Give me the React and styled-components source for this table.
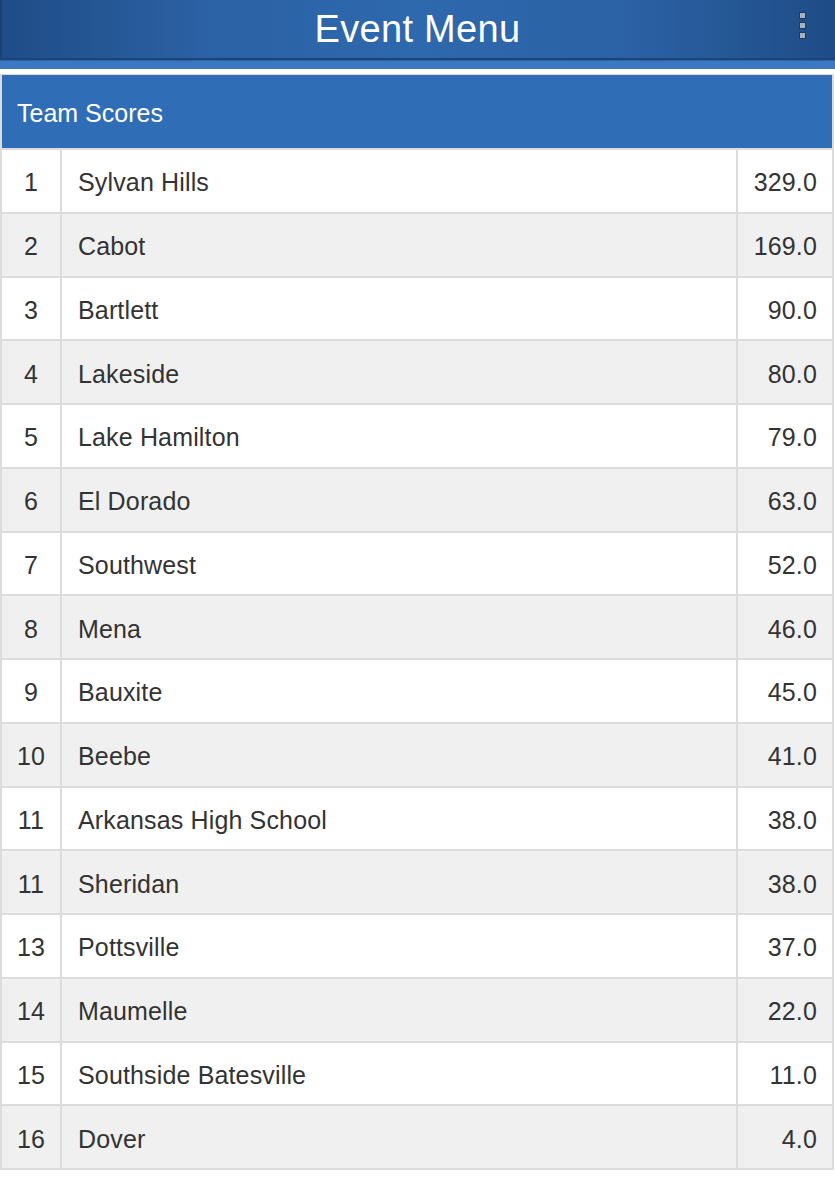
import styled, { createGlobalStyle } from 'styled-components';

const GlobalStyle = createGlobalStyle`
  body {
    margin: 0;
    background: #ffffff;
    font-family: "Liberation Sans", Arial, sans-serif;
  }
`;

const teams = [
  { rank: 1, name: 'Sylvan Hills', score: '329.0' },
  { rank: 2, name: 'Cabot', score: '169.0' },
  { rank: 3, name: 'Bartlett', score: '90.0' },
  { rank: 4, name: 'Lakeside', score: '80.0' },
  { rank: 5, name: 'Lake Hamilton', score: '79.0' },
  { rank: 6, name: 'El Dorado', score: '63.0' },
  { rank: 7, name: 'Southwest', score: '52.0' },
  { rank: 8, name: 'Mena', score: '46.0' },
  { rank: 9, name: 'Bauxite', score: '45.0' },
  { rank: 10, name: 'Beebe', score: '41.0' },
  { rank: 11, name: 'Arkansas High School', score: '38.0' },
  { rank: 11, name: 'Sheridan', score: '38.0' },
  { rank: 13, name: 'Pottsville', score: '37.0' },
  { rank: 14, name: 'Maumelle', score: '22.0' },
  { rank: 15, name: 'Southside Batesville', score: '11.0' },
  { rank: 16, name: 'Dover', score: '4.0' },
];

const App = () => {
  return (
    <>
      <GlobalStyle />
      <TopBar>
        <Title>Event Menu</Title>
        <MenuButton>
          <Dot />
          <Dot />
          <Dot />
        </MenuButton>
      </TopBar>
      <Band />
      <Panel>
        <PanelHeader>Team Scores</PanelHeader>
        {teams.map(({ rank, name, score }, index) => (
          <Row key={index} $odd={index % 2 === 1}>
            <Rank>{rank}</Rank>
            <Name>{name}</Name>
            <Score>{score}</Score>
          </Row>
        ))}
      </Panel>
    </>
  );
};

export default App;

const TopBar = styled.div`
  position: relative;
  height: 60px;
  display: flex;
  align-items: center;
  justify-content: center;
  background: linear-gradient(
    to right,
    #1f4c86 0%,
    #2b62a5 25%,
    #2e68ad 50%,
    #2b62a5 75%,
    #1f4c86 100%
  );
  box-shadow: inset 0 -2px 0 #1c4478, inset 2px 0 0 #1a4174;
`;

const Title = styled.div`
  color: #ffffff;
  font-size: 38px;
  letter-spacing: 0.3px;
  line-height: 1;
  margin-top: -2px;
`;

const MenuButton = styled.div`
  position: absolute;
  right: 29px;
  top: 12px;
  display: flex;
  flex-direction: column;
  gap: 3px;
`;

const Dot = styled.div`
  width: 5px;
  height: 5px;
  background: #a9b2bd;
  border: 1px solid #1d3a60;
`;

const Band = styled.div`
  height: 9px;
  background: #3a78c1;
  border-top: 1px solid #2f64a4;
  box-sizing: border-box;
`;

const Panel = styled.div`
  margin: 5px 1px 0 0;
  border: 2px solid #dcdcdc;
  border-top-width: 1px;
  border-bottom: none;
`;

const PanelHeader = styled.div`
  height: 73px;
  display: flex;
  align-items: center;
  padding: 3px 0 0 15px;
  box-sizing: border-box;
  background: #2f6eb6;
  color: #ffffff;
  font-size: 25px;
`;

const Row = styled.div`
  display: flex;
  height: 63.75px;
  box-sizing: border-box;
  border-top: 2px solid #dcdcdc;
  background: ${props => (props.$odd ? '#f0f0f0' : '#ffffff')};
  color: #333333;
  font-size: 25px;
  letter-spacing: 0.15px;
  &:last-child {
    height: 65.75px;
    border-bottom: 2px solid #dcdcdc;
  }
`;

const Cell = styled.div`
  display: flex;
  align-items: center;
  padding-top: 4px;
  box-sizing: border-box;
`;

const Rank = styled(Cell)`
  width: 60px;
  justify-content: center;
  border-right: 2px solid #dcdcdc;
`;

const Name = styled(Cell)`
  flex: 1;
  padding-left: 16px;
  border-right: 2px solid #dcdcdc;
`;

const Score = styled(Cell)`
  width: 94px;
  justify-content: flex-end;
  padding-right: 15px;
`;
